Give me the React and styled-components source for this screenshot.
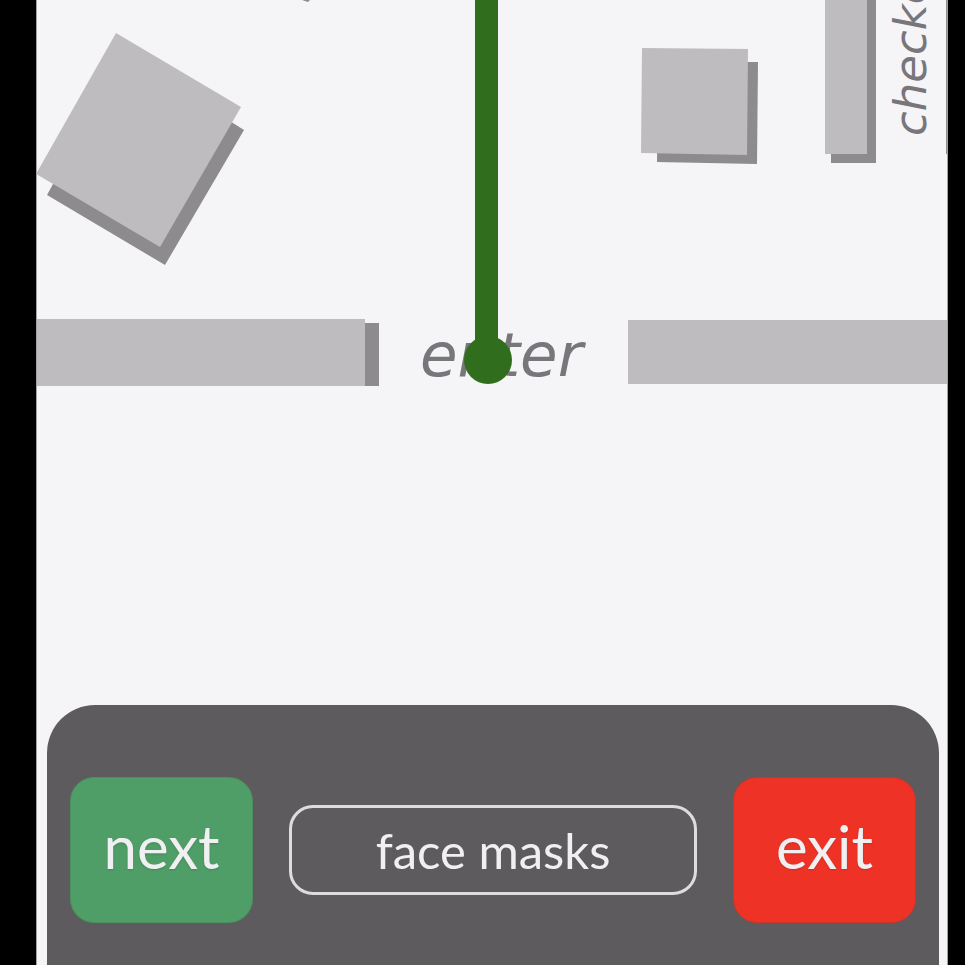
import React from "react";
import styled, { createGlobalStyle } from "styled-components";

const GlobalStyle = createGlobalStyle`
  *, *::before, *::after { box-sizing: border-box; }
  body { margin: 0; background: #000; }
`;

const Screen = styled.div`
  display: flex;
  min-height: 100vh;
  padding: 0 17px 0 36px;
  background: #000;
`;

const Phone = styled.main`
  flex: 1;
  min-width: 0;
  display: flex;
  flex-direction: column;
  background: #f5f4f7;
  border: solid #a3a2a4;
  border-width: 0 1px;
`;

const StoreMap = styled.svg`
  display: block;
  flex: 1;
  width: 100%;
  min-height: 0;
`;

const Shelf = styled.polygon`
  fill: #bebcbf;
`;

const Shade = styled.polygon`
  fill: #8d8b8e;
`;

const MapLabel = styled.text`
  font-family: "DejaVu Sans", Verdana, sans-serif;
  font-style: italic;
  font-size: ${({ $size }) => $size}px;
  fill: #78767a;
`;

const Route = styled.g`
  fill: #306e1e;
`;

const Controls = styled.footer`
  display: flex;
  align-items: center;
  gap: 36px;
  margin: 0 8px 0 10px;
  padding: 72px 23px 42px 23px;
  border-radius: 48px 48px 0 0;
  background: #5d5b5e;
`;

const ActionButton = styled.button`
  flex: none;
  width: 183px;
  height: 146px;
  padding: 0 0 8px;
  border: 1px solid ${({ $edge }) => $edge};
  border-radius: 24px;
  background: ${({ $fill }) => $fill};
  color: #f0eff2;
  font: 400 60px/72px Lato, sans-serif;
  text-shadow: 0 1px 2px rgba(0, 0, 0, 0.15);
  cursor: pointer;
`;

const ItemButton = styled.button`
  flex: 1;
  min-width: 0;
  height: 90px;
  padding: 0;
  border: 3px solid #dedce0;
  border-radius: 24px;
  background: transparent;
  color: #f0eff2;
  font: 400 49px/60px Lato, sans-serif;
  cursor: pointer;
`;

export default function App() {
  return (
    <>
      <GlobalStyle />
      <Screen>
        <Phone>
          <StoreMap
            viewBox="37 0 910 705"
            preserveAspectRatio="xMidYMid slice"
            role="img"
            aria-label="Store map with a route from the entrance"
          >
            <Shade points="302,0 310,0 308,2" />

            <Shade points="124,54 244,130 165,265 47,195" />
            <Shelf points="116,33 241,107 160,247 36,174" />

            <Shade points="658,62 758,62 757,164 657,162" />
            <Shelf points="642,48 748,49 747,155 641,153" />

            <Shade points="831,0 876,0 876,163 831,163" />
            <Shelf points="825,0 867,0 867,154 825,154" />
            <Shade points="946,0 948,0 948,154 946,154" />

            <Shade points="300,323 379,323 379,386 300,386" />
            <Shelf points="36,319 365,319 365,386 36,386" />
            <Shelf points="628,320 948,320 948,384 628,384" />

            <MapLabel $size={61} x="420" y="376">enter</MapLabel>
            <MapLabel $size={45} transform="translate(926 136) rotate(-90)">
              checko
            </MapLabel>

            <Route>
              <rect x="475" y="-10" width="23" height="370" />
              <circle cx="488" cy="360" r="24" />
            </Route>
          </StoreMap>

          <Controls>
            <ActionButton type="button" $fill="#4f9d67" $edge="#4a9060">
              next
            </ActionButton>
            <ItemButton type="button">face masks</ItemButton>
            <ActionButton type="button" $fill="#ee3326" $edge="#c9362c">
              exit
            </ActionButton>
          </Controls>
        </Phone>
      </Screen>
    </>
  );
}
